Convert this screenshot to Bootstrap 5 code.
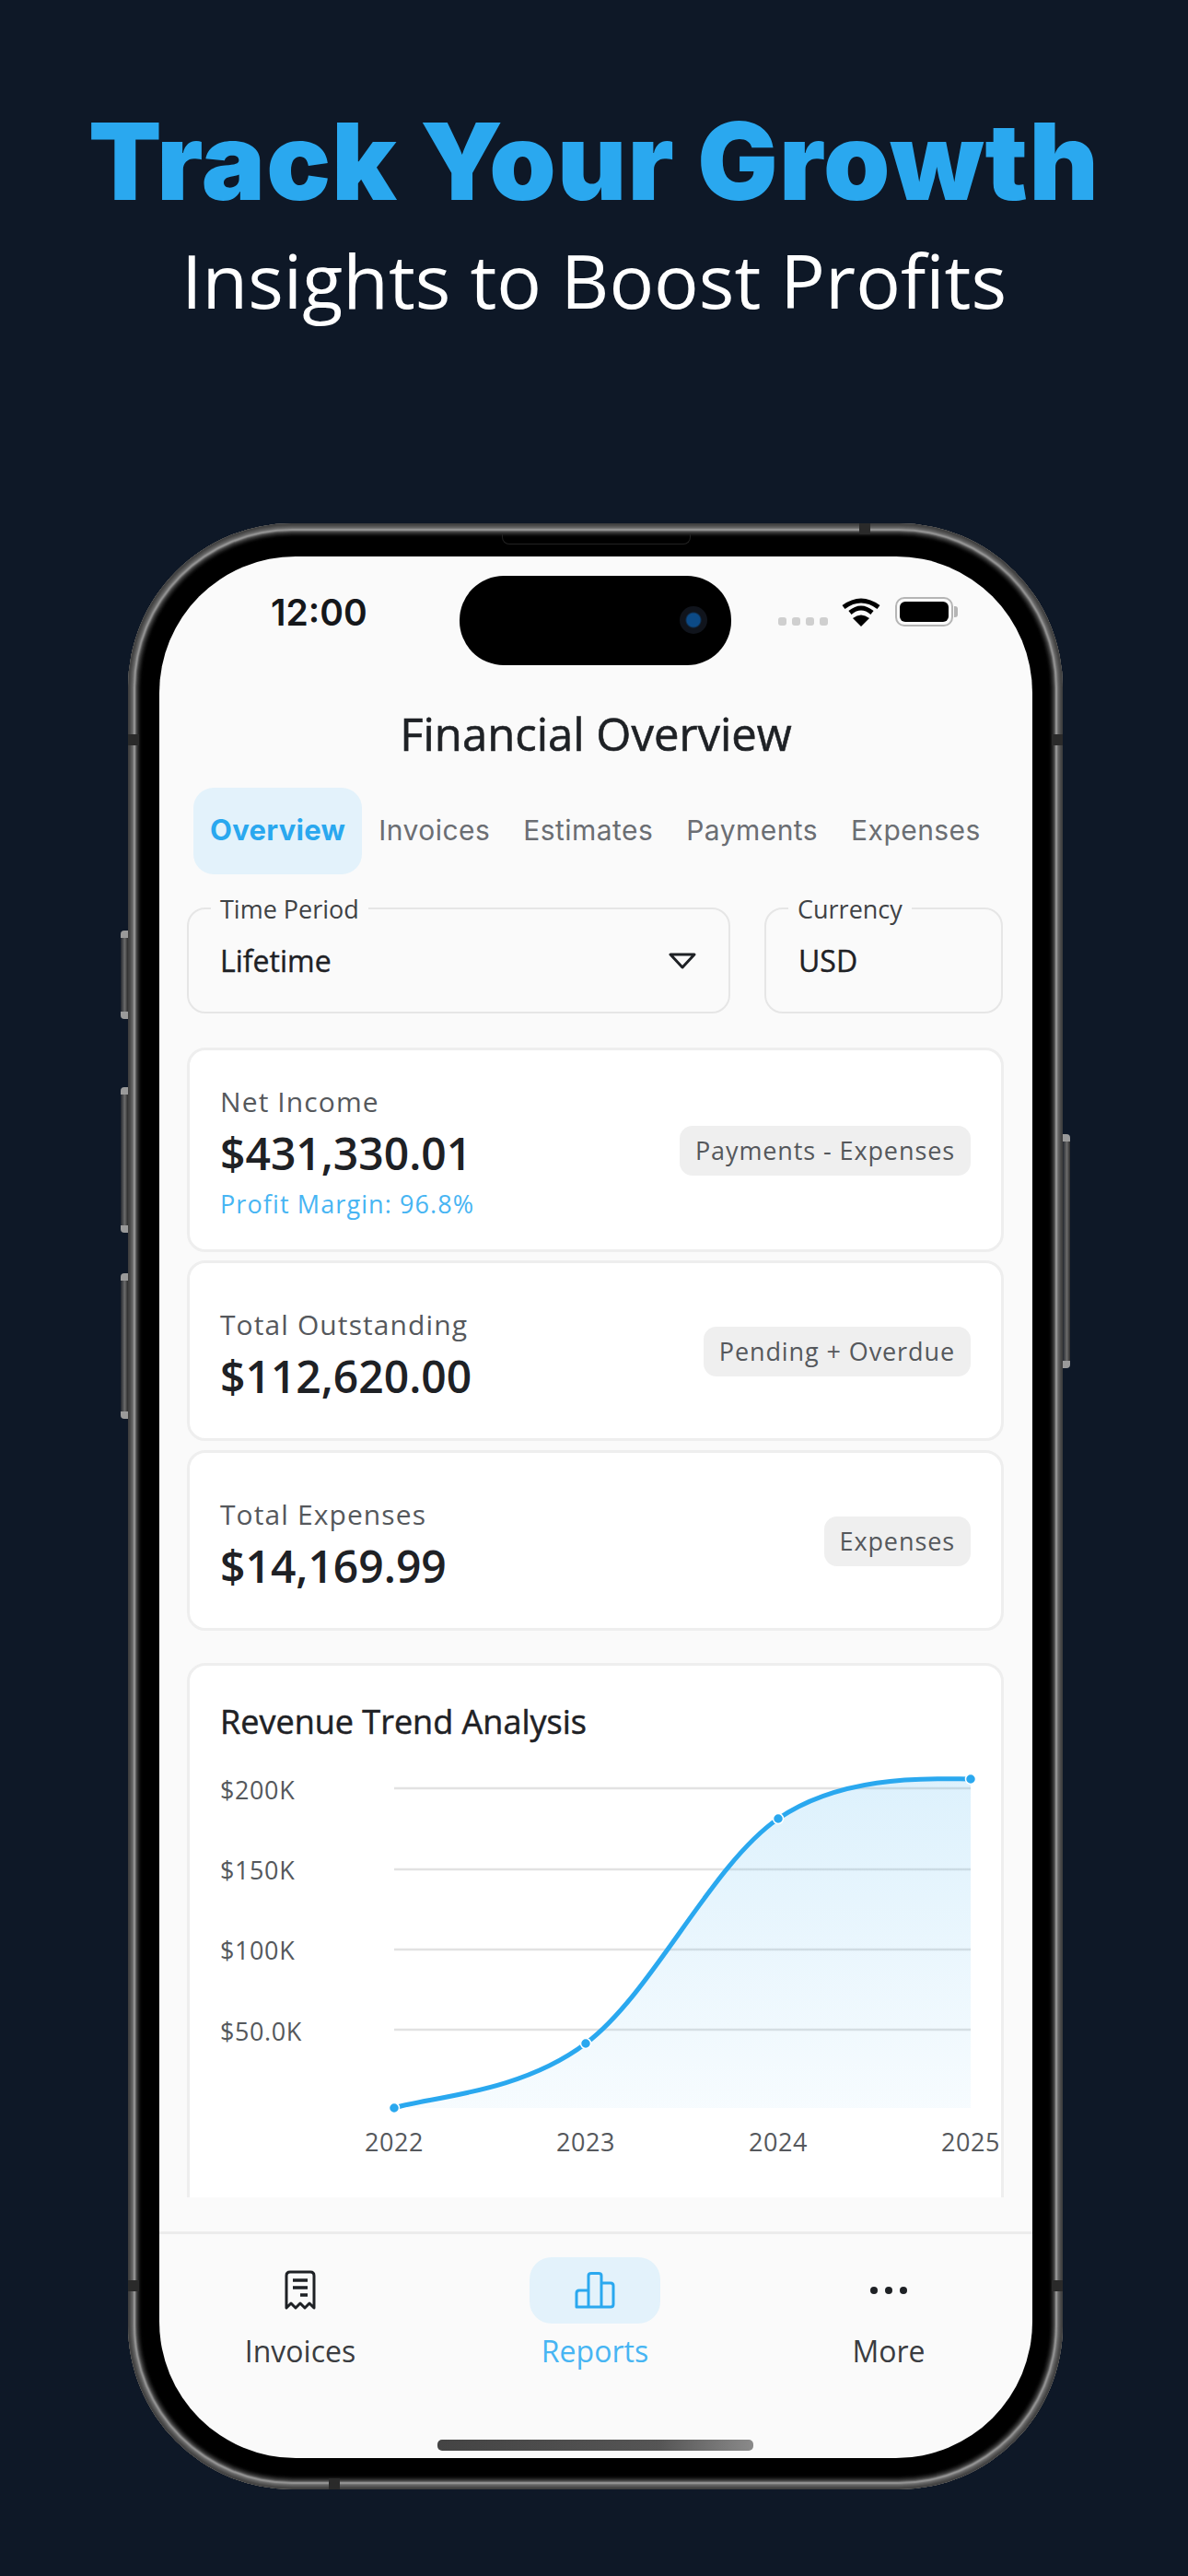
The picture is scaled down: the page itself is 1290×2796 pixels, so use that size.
<!DOCTYPE html>
<html lang="en">
<head>
    <meta charset="UTF-8">
    <meta name="viewport" content="width=device-width, initial-scale=1.0">
    <title>Track Your Growth</title>
    <link href="https://cdn.jsdelivr.net/npm/bootstrap@5.3.0/dist/css/bootstrap.min.css" rel="stylesheet">
    <style>
        body {
            background: #0e1827;
            width: 1290px;
            height: 2796px;
            overflow: hidden;
            font-family: "Open Sans", "Liberation Sans", sans-serif;
        }
        .promo-title {
            font-family: Inter, "Liberation Sans", sans-serif;
            font-weight: 900;
            font-size: 116px;
            line-height: 118px;
            letter-spacing: 1.2px;
            color: #2aa8ef;
            padding-top: 116px;
            margin: 0;
        }
        .promo-sub {
            font-size: 81px;
            line-height: 110px;
            color: #fff;
            margin: 15px 0 0;
        }
        .phone-frame {
            position: relative;
            width: 1015px;
            height: 2134px;
            margin: 209px 0 0 139px;
            padding: 36px 33px 34px 34px;
            background: #000;
            border-radius: 178px;
            box-shadow: inset 0 0 3px 3px #3f3f3f, inset 0 0 2px 6px #666, inset 0 0 2px 8px #a8a8a8, inset 0 0 4px 10px #5a5a5a, inset 0 0 4px 12px #1c1c1c;
        }
        .side-key {
            position: absolute;
            width: 8px;
            background:
                linear-gradient(#9a9a9a, #9a9a9a) top / 100% 8px no-repeat,
                linear-gradient(#9a9a9a, #9a9a9a) bottom / 100% 8px no-repeat,
                linear-gradient(90deg, #23272e, #6b6b6b 55%, #2c2c2c);
            border-radius: 4px 0 0 4px;
        }
        .key-a { left: -8px; top: 442px; height: 96px; }
        .key-b { left: -8px; top: 612px; height: 158px; }
        .key-c { left: -8px; top: 814px; height: 158px; }
        .key-d { right: -8px; top: 663px; height: 254px; border-radius: 0 4px 4px 0; }
        .band { position: absolute; background: #2a2a2a; }
        .band-top { left: 794px; top: 0; width: 12px; height: 12px; }
        .band-bottom { left: 218px; bottom: 0; width: 12px; height: 12px; }
        .band-l1 { left: 0; top: 229px; width: 12px; height: 12px; }
        .band-r1 { right: 0; top: 229px; width: 12px; height: 12px; }
        .band-l2 { left: 0; top: 1907px; width: 12px; height: 12px; }
        .band-r2 { right: 0; top: 1907px; width: 12px; height: 12px; }
        .speaker-line {
            position: absolute;
            left: 406px;
            top: 12px;
            width: 205px;
            height: 11px;
            border: 1px solid #222;
            border-top: 0;
            border-radius: 0 0 8px 8px;
        }
        .island {
            position: absolute;
            left: 360px;
            top: 57px;
            width: 295px;
            height: 97px;
            background: #000;
            border-radius: 48px;
        }
        .island-cam {
            position: absolute;
            right: 26px;
            top: 33px;
            width: 30px;
            height: 30px;
            border-radius: 50%;
            background: radial-gradient(circle, #0c4a86 0 7px, #10141c 9px 15px);
        }
        .app-screen {
            width: 948px;
            height: 2064px;
            background: #fafafa;
            border-radius: 148px;
            overflow: hidden;
            color: #1e2125;
        }
        .status-row {
            height: 139px;
            padding: 38px 86px 0 121px;
        }
        .clock {
            font-family: Inter, sans-serif;
            font-weight: 600;
            font-size: 39px;
            line-height: 46px;
            color: #15171a;
        }
        .signal-dots { gap: 6px; margin: 22px 15px 0 0; }
        .signal-dots i { width: 9px; height: 9px; border-radius: 3px; background: #cfcfcf; display: block; }
        .battery-shell {
            width: 63px;
            height: 32px;
            border: 2px solid #b5b5b5;
            border-radius: 10px;
            padding: 3px;
            margin-left: 16px;
            position: relative;
        }
        .battery-shell::before { content: ""; display: block; height: 100%; background: #000; border-radius: 6px; }
        .battery-shell::after {
            content: "";
            position: absolute;
            right: -7px;
            top: 8px;
            width: 4px;
            height: 12px;
            background: #b5b5b5;
            border-radius: 0 3px 3px 0;
        }
        .screen-title {
            font-size: 49px;
            font-weight: 500;
            line-height: 66px;
            text-align: center;
            margin: 20px 0 0;
            color: #1e2125;
            -webkit-text-stroke: .6px #1e2125;
        }
        .tab-strip {
            margin: 26px 0 0 37px;
            gap: 0;
        }
        .tab-strip .nav-link {
            font-family: Inter, sans-serif;
            font-size: 30px;
            line-height: 92px;
            height: 94px;
            padding: 0 18px;
            color: #6b6e73;
            letter-spacing: .45px;
            border-radius: 22px;
        }
        .tab-strip .nav-link.active {
            background: #e3f2fb;
            color: #2aa8ef;
            font-size: 31px;
            font-weight: 700;
            letter-spacing: .3px;
        }
        .picker-row { margin: 36px 31px 0 30px; gap: 37px; }
        .picker-box {
            position: relative;
            height: 115px;
            border: 2px solid #e6e6e6;
            border-radius: 20px;
            padding: 0 34px;
            font-size: 32px;
            font-weight: 500;
            color: #1e2125;
        }
        .picker-value { -webkit-text-stroke: .4px #1e2125; }
        .picker-time { width: 590px; }
        .picker-currency { width: 259px; padding: 0 35px; }
        .picker-tag {
            position: absolute;
            left: 24px;
            top: -15px;
            background: #fafafa;
            padding: 0 10px;
            font-size: 27px;
            line-height: 30px;
            font-weight: 400;
            color: #3f4245;
        }
        .stat-card {
            margin: 0 31px 0 30px;
            background: #fff;
            border: 3px solid #eeeeee;
            border-radius: 20px;
            padding: 0 33px;
        }
        .stat-text { padding-top: 5px; }
        .stat-text-low { padding-top: 12px; }
        .stat-label { font-size: 30px; line-height: 40px; color: #55585c; letter-spacing: 1.1px; }
        .stat-value { font-size: 48px; line-height: 66px; margin-top: 3px; font-weight: 600; color: #1e2125; }
        .stat-note { font-size: 27px; line-height: 38px; margin-top: 3px; color: #47b5f3; letter-spacing: 1.1px; }
        .stat-chip {
            background: #efefef;
            border-radius: 14px;
            margin-top: 2px;
            padding: 0 17px;
            height: 54px;
            line-height: 54px;
            font-size: 27px;
            color: #55585c;
            letter-spacing: .9px;
        }
        .scroll-pane { height: 1781px; overflow: hidden; }
        .chart-panel {
            margin: 34px 31px 0 30px;
            height: 640px;
            background: #fff;
            border: 3px solid #eeeeee;
            border-radius: 20px;
            padding: 36px 0 0 33px;
        }
        .chart-heading { font-size: 36px; line-height: 50px; font-weight: 500; color: #1e2125; margin: 0 0 27px; -webkit-text-stroke: .5px #1e2125; }
        .chart-panel svg text { font-family: "Open Sans", sans-serif; font-size: 27px; fill: #55585c; letter-spacing: .6px; }
        .bottom-bar {
            margin-top: 37px;
            height: 246px;
            border-top: 3px solid #ececec;
            position: relative;
        }
        .bar-item {
            position: absolute;
            top: 25px;
            width: 300px;
            text-align: center;
            font-size: 32px;
            line-height: 44px;
            color: #3a3c40;
        }
        .bar-glyph { height: 72px; margin-bottom: 8px; }
        .bar-item.is-on { color: #47b5f3; }
        .bar-item.is-on .bar-glyph { width: 142px; margin-left: auto; margin-right: auto; background: #e3f2fb; border-radius: 24px; }
        .home-pill {
            position: absolute;
            left: 302px;
            top: 223px;
            width: 343px;
            height: 12px;
            border-radius: 5px;
            background: linear-gradient(90deg, #444 0, #555 70%, #8a8a8a);
        }
    </style>
</head>
<body>
    <h1 class="promo-title text-center">Track Your Growth</h1>
    <p class="promo-sub text-center">Insights to Boost Profits</p>

    <div class="phone-frame">
        <span class="side-key key-a"></span>
        <span class="side-key key-b"></span>
        <span class="side-key key-c"></span>
        <span class="side-key key-d"></span>
        <span class="band band-top"></span>
        <span class="band band-bottom"></span>
        <span class="band band-l1"></span>
        <span class="band band-r1"></span>
        <span class="band band-l2"></span>
        <span class="band band-r2"></span>
        <span class="speaker-line"></span>
        <div class="island"><span class="island-cam"></span></div>

        <div class="app-screen">
            <div class="scroll-pane">
                <!-- status bar -->
                <div class="status-row d-flex justify-content-between align-items-start">
                    <div class="clock">12:00</div>
                    <div class="d-flex align-items-start" style="margin-top:6px">
                        <div class="signal-dots d-flex"><i></i><i></i><i></i><i></i></div>
                        <svg width="42" height="32" viewBox="0 0 42 32">
                            <path d="M2 11 Q21 -3 40 11" fill="none" stroke="#000" stroke-width="5"/>
                            <path d="M9 17 Q21 7 33 17" fill="none" stroke="#000" stroke-width="5"/>
                            <path d="M21 32 L12 23 Q21 16 30 23 Z" fill="#000"/>
                        </svg>
                        <div class="battery-shell"></div>
                    </div>
                </div>

                <h2 class="screen-title">Financial Overview</h2>

                <ul class="nav tab-strip">
                    <li class="nav-item"><a class="nav-link active" href="#">Overview</a></li>
                    <li class="nav-item"><a class="nav-link" href="#">Invoices</a></li>
                    <li class="nav-item"><a class="nav-link" href="#">Estimates</a></li>
                    <li class="nav-item"><a class="nav-link" href="#">Payments</a></li>
                    <li class="nav-item"><a class="nav-link" href="#">Expenses</a></li>
                </ul>

                <div class="picker-row d-flex">
                    <div class="picker-box picker-time d-flex align-items-center justify-content-between">
                        <span class="picker-tag">Time Period</span>
                        <span class="picker-value">Lifetime</span>
                        <svg width="32" height="18" viewBox="0 0 32 18"><path d="M3 2 H29 L16 16 Z" fill="none" stroke="#1e2125" stroke-width="3" stroke-linejoin="round"/></svg>
                    </div>
                    <div class="picker-box picker-currency d-flex align-items-center">
                        <span class="picker-tag">Currency</span>
                        <span class="picker-value">USD</span>
                    </div>
                </div>

                <div class="stat-card d-flex align-items-center justify-content-between" style="height:222px;margin-top:37px">
                    <div class="stat-text">
                        <div class="stat-label">Net Income</div>
                        <div class="stat-value">$431,330.01</div>
                        <div class="stat-note">Profit Margin: 96.8%</div>
                    </div>
                    <span class="stat-chip">Payments - Expenses</span>
                </div>
                <div class="stat-card d-flex align-items-center justify-content-between" style="height:196px;margin-top:9px">
                    <div class="stat-text-low">
                        <div class="stat-label">Total Outstanding</div>
                        <div class="stat-value">$112,620.00</div>
                    </div>
                    <span class="stat-chip">Pending + Overdue</span>
                </div>
                <div class="stat-card d-flex align-items-center justify-content-between" style="height:196px;margin-top:10px">
                    <div class="stat-text-low">
                        <div class="stat-label">Total Expenses</div>
                        <div class="stat-value">$14,169.99</div>
                    </div>
                    <span class="stat-chip">Expenses</span>
                </div>

                <div class="chart-panel" style="margin-top:35px">
                    <h3 class="chart-heading">Revenue Trend Analysis</h3>
                    <svg width="848" height="430" viewBox="0 0 848 430">
                        <defs>
                            <linearGradient id="revFill" x1="0" y1="0" x2="0" y2="1">
                                <stop offset="0" stop-color="#2aa8ef" stop-opacity=".16"/>
                                <stop offset="1" stop-color="#2aa8ef" stop-opacity=".04"/>
                            </linearGradient>
                        </defs>
                        <g stroke="#e2e2e2" stroke-width="2.5">
                            <line x1="189" x2="815" y1="20" y2="20"/>
                            <line x1="189" x2="815" y1="108" y2="108"/>
                            <line x1="189" x2="815" y1="195" y2="195"/>
                            <line x1="189" x2="815" y1="282" y2="282"/>
                        </g>
                        <path d="M189 367 C225 355 324 352 397 297 C470 242 533 103 606 53 C679 3 779 10 815 10 V367 Z" fill="url(#revFill)"/>
                        <path d="M189 367 C225 355 324 352 397 297 C470 242 533 103 606 53 C679 3 779 10 815 10" fill="none" stroke="#2aa8ef" stroke-width="5"/>
                        <g fill="#2aa8ef" stroke="#fff" stroke-width="1.5">
                            <circle cx="189" cy="367" r="5.5"/>
                            <circle cx="397" cy="297" r="5.5"/>
                            <circle cx="606" cy="53" r="5.5"/>
                            <circle cx="815" cy="10" r="5.5"/>
                        </g>
                        <text x="0" y="32">$200K</text>
                        <text x="0" y="119">$150K</text>
                        <text x="0" y="206">$100K</text>
                        <text x="0" y="294">$50.0K</text>
                        <text x="189" y="414" text-anchor="middle">2022</text>
                        <text x="397" y="414" text-anchor="middle">2023</text>
                        <text x="606" y="414" text-anchor="middle">2024</text>
                        <text x="815" y="414" text-anchor="middle">2025</text>
                    </svg>
                </div>
            </div>

            <div class="bottom-bar">
                <div class="bar-item" style="left:3px">
                    <div class="bar-glyph d-flex align-items-center justify-content-center">
                        <svg width="34" height="44" viewBox="0 0 34 44">
                            <path d="M2 41 V6 Q2 2 6 2 H28 Q32 2 32 6 V41 L27 36 L22 41 L17 36 L12 41 L7 36 Z" fill="none" stroke="#1e2125" stroke-width="3" stroke-linejoin="round"/>
                            <path d="M9 11 H25 M9 19 H25 M17 27 H25" stroke="#1e2125" stroke-width="3.5"/>
                        </svg>
                    </div>
                    Invoices
                </div>
                <div class="bar-item is-on" style="left:323px">
                    <div class="bar-glyph d-flex align-items-center justify-content-center">
                        <svg width="44" height="40" viewBox="0 0 44 40">
                            <path d="M2 38 V23 Q2 20 5 20 H15 V38 Z M15 38 V4 Q15 1.500 18 1.500 H26 Q29 1.500 29 4 V38 Z M29 38 V12 H39 Q42 12 42 15 V35 Q42 38 39 38 Z" fill="none" stroke="#2aa8ef" stroke-width="3" stroke-linejoin="round"/>
                        </svg>
                    </div>
                    Reports
                </div>
                <div class="bar-item" style="left:642px">
                    <div class="bar-glyph d-flex align-items-center justify-content-center">
                        <svg width="42" height="10" viewBox="0 0 42 10"><circle cx="5" cy="5" r="4" fill="#1e2125"/><circle cx="21" cy="5" r="4" fill="#1e2125"/><circle cx="37" cy="5" r="4" fill="#1e2125"/></svg>
                    </div>
                    More
                </div>
                <span class="home-pill"></span>
            </div>
        </div>
    </div>

    <script src="https://cdn.jsdelivr.net/npm/bootstrap@5.3.0/dist/js/bootstrap.bundle.min.js"></script>
</body>
</html>
